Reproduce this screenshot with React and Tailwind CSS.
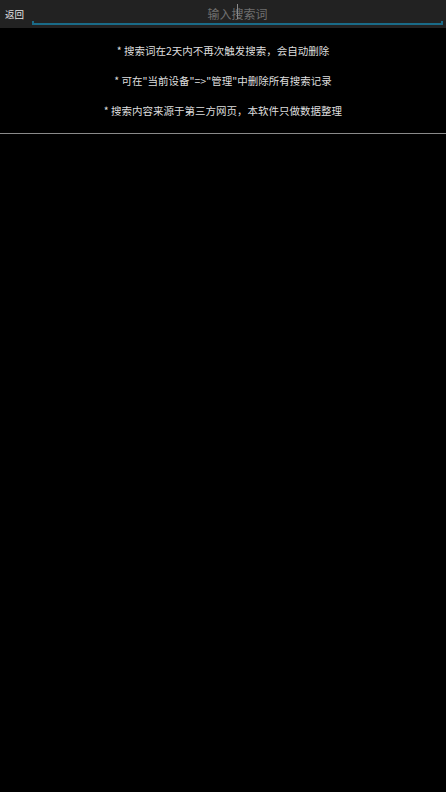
import { useState } from "react";

const tips = [
  "* 搜索词在2天内不再次触发搜索，会自动删除",
  "* 可在\"当前设备\"=>\"管理\"中删除所有搜索记录",
  "* 搜索内容来源于第三方网页，本软件只做数据整理",
];

const App = () => {
  const [query, setQuery] = useState("");

  return (
    <div
      className="w-[446px] h-[792px] bg-black flex flex-col"
      style={{ fontFamily: '"Noto Sans CJK SC", "Noto Sans", sans-serif' }}
    >
      {/* top bar */}
      <div className="h-[28px] bg-[#222222] flex items-center">
        <button className="w-[32px] h-full text-[9.5px] text-[#e6e6e6] pl-[5px] text-left">
          返回
        </button>
        <div className="flex-1 h-full relative mr-[3px]">
          <input
            value={query}
            onChange={(e) => setQuery(e.target.value)}
            placeholder="输入搜索词"
            className="w-full h-[22px] bg-transparent text-center text-[12px] text-[#dddddd] placeholder:text-[#6f6f6f] outline-none"
          />
          <div className="absolute left-[205px] top-[4px] w-px h-[15px] bg-[#8a8a8a]" />
          <div className="absolute left-0 right-0 top-[23px] h-[2px] bg-[#1a6b88]" />
          <div className="absolute left-0 top-[21px] w-[2px] h-[4px] bg-[#1a6b88]" />
          <div className="absolute right-0 top-[21px] w-[2px] h-[4px] bg-[#1a6b88]" />
        </div>
      </div>

      {/* tips */}
      <div className="flex flex-col items-center pt-[16px] pb-[15px] gap-[16px] border-b border-[#8a8a8a]">
        {tips.map((t) => (
          <p key={t} className="text-[10.5px] leading-[14px] text-[#dedede]">
            {t}
          </p>
        ))}
      </div>
    </div>
  );
};

export default App;
